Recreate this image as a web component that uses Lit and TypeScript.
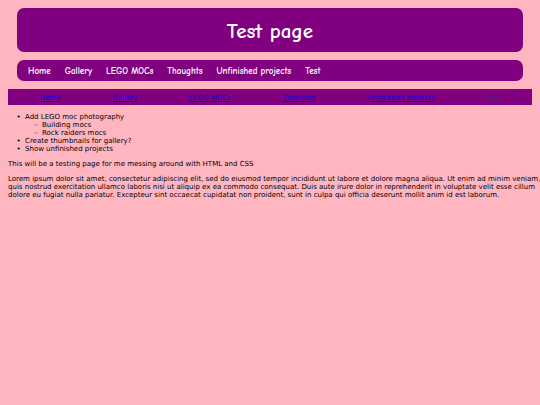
import { LitElement, html, css } from 'lit';
import { customElement, state } from 'lit/decorators.js';
import { classMap } from 'lit/directives/class-map.js';

interface PageLink {
    label: string;
    current?: boolean;
}

@customElement('app-root')
export class AppRoot extends LitElement {
    @state() private _links: PageLink[] = [
        { label: 'Home' },
        { label: 'Gallery' },
        { label: 'LEGO MOCs' },
        { label: 'Thoughts' },
        { label: 'Unfinished projects' },
        { label: 'Test', current: true },
    ];

    static styles = css`
        :host {
            display: block;
            box-sizing: border-box;
            min-height: 100vh;
            padding: 8px;
            overflow-x: clip;
            background: lightpink;
            color: #000;
            font: 7px/8px 'DejaVu Sans', Verdana, sans-serif;
        }
        header, .menu {
            margin: 0 9px 8px;
            background: purple;
            border-radius: 7px;
            color: #fff;
            font-family: 'Comic Sans MS', 'Comic Neue', cursive, sans-serif;
            font-weight: 700;
        }
        header { padding: 9px 8px 7px; text-align: center; }
        h1 { margin: 0; font-size: 21px; font-weight: inherit; line-height: 28px; }
        .menu { display: flex; gap: 14px; padding: 5px 11px 3px; font-size: 9px; line-height: 13px; }
        .menu a { color: inherit; text-decoration: none; }
        .bar { display: flex; justify-content: space-between; padding: 5px 32px 3px; background: purple; }
        .bar a { color: #0000ee; }
        .bar a.current { color: #551a8b; }
        ul { margin: 8px 0 7px; padding-left: 17px; list-style-type: '•  '; }
        ul ul { margin: 0; list-style-type: '◦  '; }
        /* paragraphs run into the page gutter */
        p { margin: 7px -10px 7px 0; }
    `;

    render() {
        return html`
            <header><h1>Test page</h1></header>
            <nav class="menu" aria-label="Main">
                ${this._links.map((l) => html`<a href="#">${l.label}</a>`)}
            </nav>
            <nav class="bar" aria-label="Secondary">
                ${this._links.map((l) => html`<a href="#" class=${classMap({ current: !!l.current })}>${l.label}</a>`)}
            </nav>
            <main>
                <ul>
                    <li>Add LEGO moc photography
                        <ul>
                            <li>Building mocs</li>
                            <li>Rock raiders mocs</li>
                        </ul>
                    </li>
                    <li>Create thumbnails for gallery?</li>
                    <li>Show unfinished projects</li>
                </ul>
                <p>This will be a testing page for me messing around with HTML and CSS</p>
                <p>
                    Lorem ipsum dolor sit amet, consectetur adipiscing elit, sed do eiusmod tempor incididunt ut labore
                    et dolore magna aliqua. Ut enim ad minim veniam, quis nostrud exercitation ullamco laboris nisi ut
                    aliquip ex ea commodo consequat. Duis aute irure dolor in reprehenderit in voluptate velit esse
                    cillum dolore eu fugiat nulla pariatur. Excepteur sint occaecat cupidatat non proident, sunt in
                    culpa qui officia deserunt mollit anim id est laborum.
                </p>
            </main>
        `;
    }
}

declare global { interface HTMLElementTagNameMap { 'app-root': AppRoot; } }
